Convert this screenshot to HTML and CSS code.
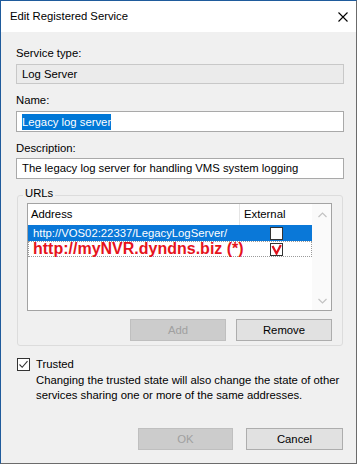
FILE: index.html
```html
<!DOCTYPE html>
<html>
<head>
<meta charset="utf-8">
<link rel="stylesheet" href="styles.css">
</head>
<body>
<div class="window">
  <div class="titlebar">
    <span class="title">Edit Registered Service</span>
    <svg class="close" width="10" height="10" viewBox="0 0 10 10"><path d="M0.5 0.5 L9.5 9.5 M9.5 0.5 L0.5 9.5" stroke="#000" stroke-width="1.1" fill="none"/></svg>
  </div>
  <div class="content">
    <div class="lbl">Service type:</div>
    <div class="field ro">Log Server</div>
    <div class="lbl gap">Name:</div>
    <div class="field"><span class="sel">Legacy log server</span></div>
    <div class="lbl gap">Description:</div>
    <div class="field f3">The legacy log server for handling VMS system logging</div>

    <div class="group">
      <div class="legend">URLs</div>
      <div class="listview">
        <div class="lv-main">
          <div class="lv-header">
            <div class="h-addr">Address</div>
            <div class="h-ext">External</div>
          </div>
          <div class="row selected">
            <div class="c-addr">http://VOS02:22337/LegacyLogServer/</div>
            <div class="c-ext"><span class="cb"></span></div>
          </div>
          <div class="row focus">
            <div class="c-addr red">http://myNVR.dyndns.biz (*)</div>
            <div class="c-ext"><span class="cb"><svg width="11" height="11" viewBox="0 0 11 11"><path d="M1.5 2 L5.5 9.5 L9.8 1" stroke="#e0101c" stroke-width="2.2" fill="none"/></svg></span></div>
          </div>
        </div>
        <div class="scroll">
          <svg width="9" height="6" viewBox="0 0 9 6"><path d="M0.5 5 L4.5 1 L8.5 5" stroke="#c2c2c2" stroke-width="1.2" fill="none"/></svg>
          <svg width="9" height="6" viewBox="0 0 9 6"><path d="M0.5 1 L4.5 5 L8.5 1" stroke="#c2c2c2" stroke-width="1.2" fill="none"/></svg>
        </div>
      </div>
      <div class="btnrow">
        <div class="btn disabled">Add</div>
        <div class="btn">Remove</div>
      </div>
    </div>

    <div class="trusted">
      <span class="cb tcb"><svg width="11" height="11" viewBox="0 0 11 11"><path d="M1.5 5.5 L4.2 8.3 L9.5 2.2" stroke="#333" stroke-width="1.1" fill="none"/></svg></span>
      <span>Trusted</span>
    </div>
    <div class="note">Changing the trusted state will also change the state of other<br>services sharing one or more of the same addresses.</div>

    <div class="footer">
      <div class="btn disabled ok">OK</div>
      <div class="btn cancel">Cancel</div>
    </div>
  </div>
</div>
</body>
</html>
```

FILE: styles.css
```css
html, body {
  margin: 0;
  padding: 0;
  background: #ffffff;
}

body {
  font-family: "Liberation Sans", Arial, sans-serif;
  font-size: 11.3px;
  line-height: 15px;
  color: #000;
}

.window {
  box-sizing: border-box;
  width: 357px;
  height: 464px;
  border: 1px solid #6b6b6b;
  border-top-color: #1f5b9c;
  border-left-color: #1f5b9c;
  background: #f0f0f0;
  display: flex;
  flex-direction: column;
}

.titlebar {
  height: 31px;
  background: #fff;
  display: flex;
  align-items: center;
  justify-content: space-between;
  padding-left: 9px;
  padding-right: 8px;
  flex: none;
}

.close {
  display: block;
}

.content {
  padding: 14px 12px 0 15px;
  display: flex;
  flex-direction: column;
}

.lbl {
  height: 15px;
}

.lbl.gap {
  margin-top: 9px;
}

.field {
  box-sizing: border-box;
  width: 328px;
  height: 21px;
  margin-top: 3px;
  border: 1px solid #a9a9a9;
  background: #fff;
  padding: 0 5px;
  display: flex;
  align-items: center;
  white-space: nowrap;
}

.field.ro {
  height: 20px;
  background: #ebebeb;
  border-color: #c8c8c8;
}

.field.f3 {
  margin-top: 2px;
}

.sel {
  display: inline-block;
  line-height: 16px;
  background: #0078d7;
  color: #fff;
}

.group {
  box-sizing: border-box;
  width: 326px;
  margin-top: 16px;
  margin-left: 1px;
  border: 1px solid #dcdcdc;
  border-radius: 3px;
  padding: 0 10px 4px 9px;
}

.legend {
  width: fit-content;
  margin: -10px 0 2px -4px;
  padding: 0 2px;
  background: #f0f0f0;
}

.listview {
  box-sizing: border-box;
  width: 305px;
  height: 108px;
  border: 1px solid #a3a3a3;
  background: #fff;
  display: flex;
}

.lv-main {
  width: 284px;
}

.lv-header {
  height: 21px;
  display: flex;
  align-items: center;
}

.h-addr {
  box-sizing: border-box;
  width: 212px;
  padding-left: 3px;
  border-right: 1px solid #e5e5e5;
  line-height: 21px;
}

.h-ext {
  padding-left: 4px;
}

.row {
  box-sizing: border-box;
  height: 16px;
  display: flex;
  align-items: center;
  white-space: nowrap;
}

.row.selected {
  background: #0a78d8;
  color: #fff;
}

.row.focus {
  border: 1px dotted #9a9a9a;
}

.c-addr {
  box-sizing: border-box;
  width: 212px;
  padding-left: 5px;
}

.row.focus .c-addr {
  padding-left: 4px;
}

.red {
  color: #e5131c;
  font-weight: bold;
  font-size: 16px;
  line-height: 16px;
}

.c-ext {
  flex: 1;
  display: flex;
  justify-content: center;
}

.cb {
  box-sizing: border-box;
  width: 13px;
  height: 13px;
  border: 1px solid #333;
  background: #fff;
  display: flex;
  align-items: center;
  justify-content: center;
}

.cb svg {
  display: block;
}

.scroll {
  flex: 1;
  display: flex;
  flex-direction: column;
  justify-content: space-between;
  align-items: center;
  padding: 8px 0 6px 2px;
  background: #fafafa;
}

.btnrow {
  display: flex;
  justify-content: flex-end;
  gap: 10px;
  margin-top: 8px;
}

.btn {
  box-sizing: border-box;
  width: 96px;
  height: 22px;
  border: 1px solid #adadad;
  background: #e1e1e1;
  display: flex;
  align-items: center;
  justify-content: center;
}

.btn.disabled {
  background: #cccccc;
  border-color: #bfbfbf;
  color: #a0a0a0;
}

.trusted {
  margin-top: 11px;
  margin-left: 1px;
  height: 15px;
  display: flex;
  align-items: center;
  gap: 6px;
}

.note {
  margin-top: 1px;
  padding-left: 20px;
  white-space: nowrap;
}

.footer {
  margin-top: 25px;
  margin-right: 1px;
  display: flex;
  justify-content: flex-end;
  gap: 13px;
}

.btn.ok {
  width: 95px;
}

.btn.cancel {
  width: 97px;
}
```
